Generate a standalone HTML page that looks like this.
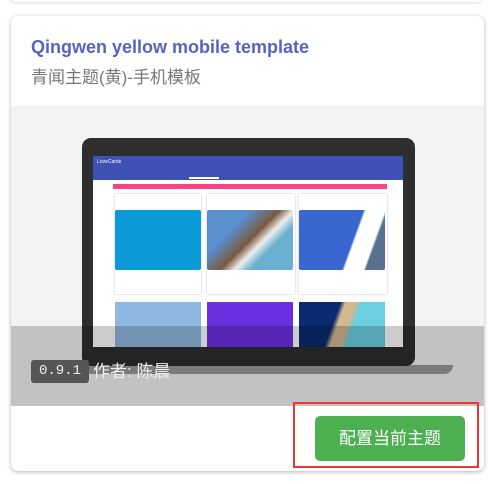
<!DOCTYPE html>
<html><head><meta charset="utf-8"><style>
*{margin:0;padding:0;box-sizing:border-box}
body{width:493px;height:484px;background:#fff;position:relative;overflow:hidden;font-family:"Liberation Sans","Noto Sans CJK SC",sans-serif}
.top{position:absolute;left:10px;top:-10px;width:473px;height:12px;border-radius:6px;box-shadow:0 1px 3px rgba(0,0,0,.15)}
.card{position:absolute;left:11px;top:16px;width:473px;height:455px;background:#fff;border-radius:7px;box-shadow:0 1px 4px rgba(0,0,0,.3);overflow:hidden}
.t1{position:absolute;left:20px;top:21px;font-size:18px;font-weight:bold;color:#5563c1;letter-spacing:0}
.t2{position:absolute;left:20px;top:47px;font-size:17px;color:#777}
.img{position:absolute;left:0;top:90px;width:473px;height:300px;background:#f3f3f3;overflow:hidden}
.abs{position:absolute}
.ov{position:absolute;left:0;top:220px;width:473px;height:80px;background:rgba(0,0,0,.2)}
.btn{position:absolute;left:304px;top:400px;width:150px;height:45px;background:#4caf50;border-radius:5px;color:#fff;font-size:17px;text-align:center;line-height:45px}
.red{position:absolute;left:293px;top:402px;width:186px;height:66px;border:2px solid #f03434}
.c{position:absolute;background:#fff}
</style></head><body>
<div class="top"></div>
<div class="card">
<div class="t1">Qingwen yellow mobile template</div>
<div class="t2">青闻主题(黄)-手机模板</div>
<div class="img">
 <div class="abs" style="left:72px;top:259px;width:370px;height:9px;background:#9a9a9a;border-radius:0 0 40px 40px"></div>
 <div class="abs" style="left:71px;top:32px;width:333px;height:228px;background:#2e2e2e;border-radius:9px"></div>
 <div class="abs" style="left:82px;top:50px;width:310px;height:191px;background:#fff;overflow:hidden">
  <div class="abs" style="left:0;top:0;width:310px;height:24px;background:#3f51b5"></div>
  <div class="abs" style="left:4px;top:3px;font-size:5px;color:#fff">LoveCards</div>
  <div class="abs" style="left:96px;top:21px;width:30px;height:2px;background:#fff"></div>
  <div class="abs" style="left:20px;top:28px;width:274px;height:5px;background:#ff4081"></div>
  <div class="c" style="left:22px;top:38px;width:86px;height:100px;box-shadow:0 0 2px #bbb"></div>
  <div class="abs" style="left:22px;top:54px;width:86px;height:60px;background:#0a9ad8;border-radius:2px"></div>
  <div class="c" style="left:114px;top:38px;width:88px;height:100px;box-shadow:0 0 2px #bbb"></div>
  <div class="abs" style="left:114px;top:54px;width:86px;height:60px;background:linear-gradient(135deg,#5a8fd0 30%,#7a5a40 50%,#eee 60%,#6ab0d0 70%);border-radius:2px"></div>
  <div class="c" style="left:206px;top:38px;width:88px;height:100px;box-shadow:0 0 2px #bbb"></div>
  <div class="abs" style="left:206px;top:54px;width:86px;height:60px;background:linear-gradient(110deg,#3a66d0 60%,#fff 62%,#fff 80%,#5a7090 82%);border-radius:2px"></div>
  <div class="abs" style="left:22px;top:146px;width:86px;height:50px;background:#8fb8e0"></div>
  <div class="abs" style="left:114px;top:146px;width:86px;height:50px;background:#6a30e0"></div>
  <div class="abs" style="left:206px;top:146px;width:86px;height:50px;background:linear-gradient(110deg,#0a2a70 40%,#d4b890 45%,#d4b890 55%,#6ad0e0 60%)"></div>
 </div>
 <div class="ov"></div>
 <div class="abs" style="left:20px;top:254px;width:58px;height:23px;background:#555;border-radius:3px;color:#eee;font-family:'Liberation Mono',monospace;font-size:14px;line-height:23px;text-align:center">0.9.1</div>
 <div class="abs" style="left:82px;top:254px;font-size:17px;color:#eee;line-height:23px">作者: 陈晨</div>
</div>
<div class="btn">配置当前主题</div>
</div>
<div class="red"></div>
</body></html>
